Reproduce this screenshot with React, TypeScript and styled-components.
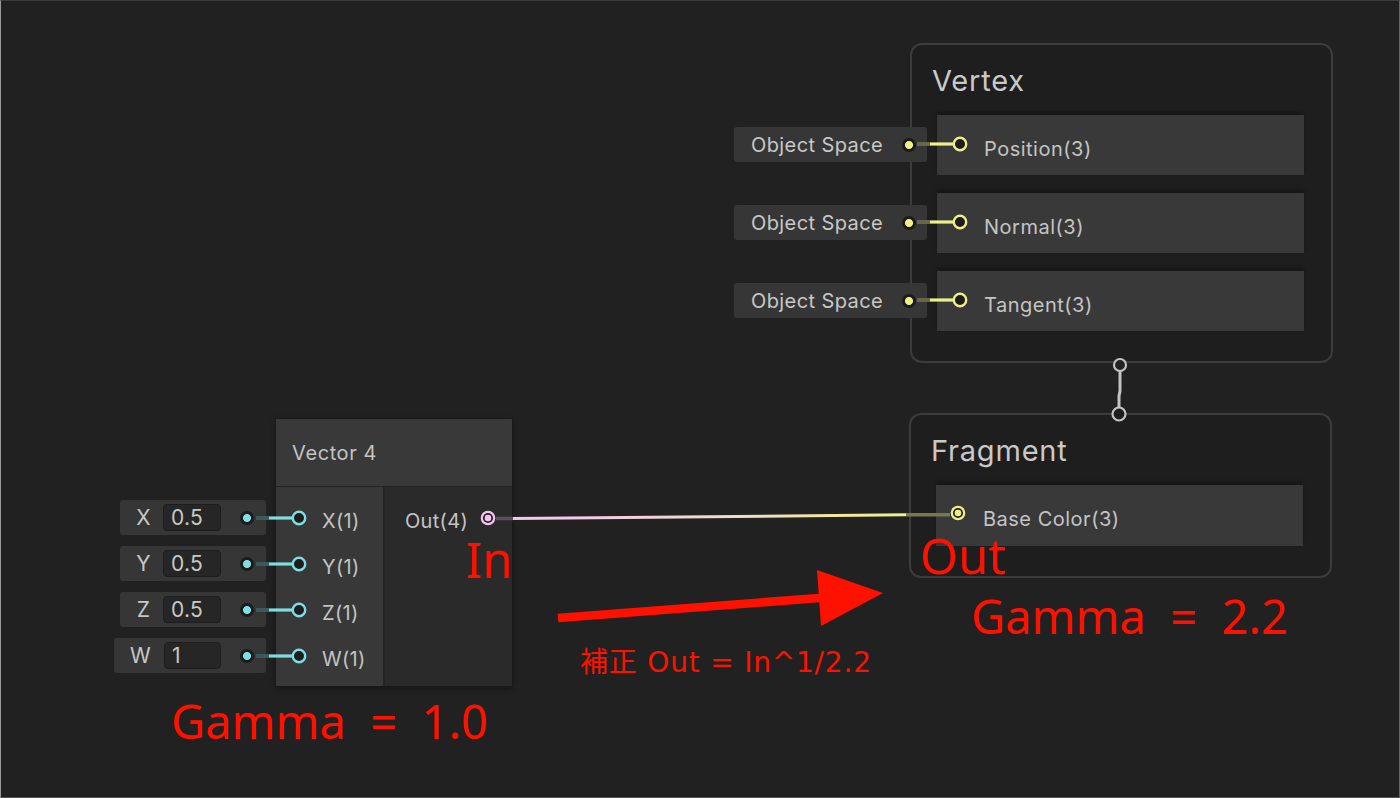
import React from "react";
import styled, { createGlobalStyle } from "styled-components";

const YELLOW = "#eef08a";
const YELLOW_DIM = "#66664a";
const CYAN = "#7fdde3";
const CYAN_DIM = "#3b5a5c";
const PINK = "#f4c4ee";
const RED = "#ff1100";

const GlobalStyle = createGlobalStyle`
  html, body {
    margin: 0;
    padding: 0;
    background: #212121;
  }
  body {
    font-family: Inter, "Noto Sans", sans-serif;
  }
`;

const Canvas = styled.main`
  position: relative;
  width: 1400px;
  height: 798px;
  box-sizing: border-box;
  background: #212121;
  border-top: 1px solid #3c3c3c;
  border-left: 1px solid #9a9a9a;
  border-right: 1px solid #666666;
  border-bottom: 1px solid #555555;
  overflow: hidden;
  font-family: Inter, "Noto Sans", sans-serif;
`;

/* ---------- master stack nodes (Vertex / Fragment) ---------- */

const ContextNode = styled.section<{ $x: number; $y: number }>`
  position: absolute;
  left: ${(p) => p.$x}px;
  top: ${(p) => p.$y}px;
  width: 423px;
  box-sizing: border-box;
  border: 2px solid #3c3c3c;
  border-radius: 12px;
  background: #1e1e1e;
  padding: 0 27px 30px 25px;
  display: flex;
  flex-direction: column;
  gap: 18px;
`;

const ContextTitle = styled.h2`
  margin: 0 0 0 -5px;
  height: 52px;
  box-sizing: border-box;
  padding-top: 22px;
  font-size: 29px;
  line-height: 28px;
  letter-spacing: 0.8px;
  font-weight: 400;
  color: #c9c9c9;
`;

const Slot = styled.div<{ $h: number }>`
  position: relative;
  height: ${(p) => p.$h}px;
  background: #393939;
  box-shadow: 0 -3px 4px rgba(0, 0, 0, 0.28);
  display: flex;
  align-items: center;
  padding: 7px 0 0 47px;
  box-sizing: border-box;
  font-size: 20px;
  letter-spacing: 0.5px;
  color: #c4c4c4;
`;

const InlineField = styled.div`
  position: absolute;
  right: calc(100% + 10px);
  top: 50%;
  margin-top: -18px;
  width: 193px;
  height: 35px;
  box-sizing: border-box;
  border-radius: 3px;
  background: #363636;
  display: flex;
  align-items: center;
  justify-content: space-between;
  padding: 0 11px 0 17px;
  font-size: 20px;
  letter-spacing: 0.4px;
  color: #c8c8c8;
`;

const FieldDot = styled.span<{ $c: string }>`
  flex: none;
  width: 14px;
  height: 14px;
  border-radius: 50%;
  background: radial-gradient(circle, ${(p) => p.$c} 0 3.6px, #1b1b1b 4.4px);
`;

const WireSvg = styled.svg<{ $dy: number }>`
  position: absolute;
  left: -20px;
  top: 50%;
  margin-top: ${(p) => p.$dy}px;
  overflow: visible;
`;

const PortHolder = styled.span`
  position: absolute;
  left: 14px;
  top: 50%;
  margin-top: -11px;
  display: flex;
`;

/* an empty input port with the short wire coming from its inline field */
function PortWire({ color, dim, dy }: { color: string; dim: string; dy: number }) {
  return (
    <WireSvg $dy={dy} width="52" height="20" viewBox="0 0 52 20">
      <line x1="0" y1="10" x2="13" y2="10" stroke={dim} strokeWidth="4" />
      <line x1="13" y1="10" x2="37" y2="10" stroke={color} strokeWidth="3.2" />
      <circle cx="43" cy="10" r="6.2" fill="#1d1d1d" stroke={color} strokeWidth="2.4" />
    </WireSvg>
  );
}

/* a port with an edge attached */
function LinkedPort({ color }: { color: string }) {
  return (
    <svg width="16" height="16" viewBox="0 0 16 16">
      <circle cx="8" cy="8" r="6.2" fill="#232323" stroke={color} strokeWidth="2.2" />
      <circle cx="8" cy="8" r="3.3" fill={color} />
    </svg>
  );
}

/* ---------- Vector 4 node ---------- */

const VecNode = styled.section`
  position: absolute;
  left: 275px;
  top: 418px;
  width: 236px;
  background: #2a2a2a;
  box-shadow: 0 0 0 1px #1a1a1a, 0 2px 6px rgba(0, 0, 0, 0.45);
  display: flex;
  flex-direction: column;
`;

const VecHeader = styled.header`
  height: 68px;
  box-sizing: border-box;
  background: #393939;
  border-bottom: 1px solid #242424;
  display: flex;
  align-items: center;
  padding-left: 16px;
  font-size: 20px;
  letter-spacing: 0.6px;
  color: #c4c4c4;
`;

const VecBody = styled.div`
  display: flex;
`;

const InputColumn = styled.div`
  width: 109px;
  box-sizing: border-box;
  border-right: 2px solid #242424;
  background: #383838;
  padding: 8px 0 7px;
  display: flex;
  flex-direction: column;
`;

const OutputColumn = styled.div`
  flex: 1;
  background: #2a2a2a;
  padding: 8px 16px 0 20px;
  display: flex;
  flex-direction: column;
`;

const InputRow = styled.div`
  position: relative;
  height: 46px;
  display: flex;
  align-items: center;
  padding: 6px 0 0 46px;
  box-sizing: border-box;
  font-size: 20px;
  letter-spacing: 0.3px;
  color: #c4c4c4;
`;

const OutputRow = styled.div`
  height: 46px;
  display: flex;
  align-items: center;
  justify-content: space-between;
  font-size: 20px;
  letter-spacing: 0.3px;
  color: #c4c4c4;
`;

const OutputLabel = styled.span`
  padding-top: 6px;
`;

const VecField = styled.div`
  position: absolute;
  right: calc(100% + 10px);
  top: 50%;
  margin-top: -18px;
  height: 35px;
  box-sizing: border-box;
  border-radius: 3px;
  background: #363636;
  display: flex;
  align-items: center;
  padding-right: 12px;
  font-size: 21px;
  letter-spacing: 0.3px;
  color: #c8c8c8;
`;

const AxisLabel = styled.span<{ $wide?: boolean }>`
  width: ${(p) => (p.$wide ? 50 : 43)}px;
  text-align: center;
  padding-left: ${(p) => (p.$wide ? 3 : 4)}px;
  box-sizing: border-box;
`;

const ValueBox = styled.span<{ $w: number }>`
  width: ${(p) => p.$w}px;
  height: 27px;
  box-sizing: border-box;
  border: 1px solid #1d1d1d;
  border-radius: 4px;
  background: #262626;
  padding-left: 7px;
  display: flex;
  align-items: center;
  margin-right: 19px;
`;

/* ---------- edges, flow link and red notes ---------- */

const EdgeLayer = styled.svg`
  position: absolute;
  left: -1px;
  top: -1px;
  width: 1400px;
  height: 798px;
  pointer-events: none;
`;

const Note = styled.span<{ $x: number; $y: number; $size: number }>`
  position: absolute;
  left: ${(p) => p.$x}px;
  top: ${(p) => p.$y}px;
  font-family: "Noto Sans", "Noto Sans CJK JP", sans-serif;
  font-size: ${(p) => p.$size}px;
  line-height: 1;
  color: ${RED};
  white-space: pre;
`;

const Formula = styled(Note)`
  font-family: "DejaVu Sans", "Noto Sans CJK JP", sans-serif;
  letter-spacing: 0.8px;
`;

const vertexSlots = ["Position(3)", "Normal(3)", "Tangent(3)"];

const vecInputs = [
  { axis: "X", value: "0.5" },
  { axis: "Y", value: "0.5" },
  { axis: "Z", value: "0.5" },
  { axis: "W", value: "1", wide: true },
];

export default function App() {
  return (
    <>
      <GlobalStyle />
      <Canvas>
        <ContextNode $x={909} $y={42}>
          <ContextTitle>Vertex</ContextTitle>
          {vertexSlots.map((name) => (
            <Slot key={name} $h={60}>
              <InlineField>
                <span>Object Space</span>
                <FieldDot $c={YELLOW} />
              </InlineField>
              <PortWire color={YELLOW} dim={YELLOW_DIM} dy={-11} />
              {name}
            </Slot>
          ))}
        </ContextNode>

        <ContextNode $x={908} $y={412}>
          <ContextTitle>Fragment</ContextTitle>
          <Slot $h={61}>
            <PortHolder>
              <LinkedPort color={YELLOW} />
            </PortHolder>
            Base Color(3)
          </Slot>
        </ContextNode>

        <VecNode>
          <VecHeader>Vector 4</VecHeader>
          <VecBody>
            <InputColumn>
              {vecInputs.map((inp) => (
                <InputRow key={inp.axis}>
                  <VecField>
                    <AxisLabel $wide={inp.wide}>{inp.axis}</AxisLabel>
                    <ValueBox $w={inp.wide ? 57 : 58}>{inp.value}</ValueBox>
                    <FieldDot $c={CYAN} />
                  </VecField>
                  <PortWire color={CYAN} dim={CYAN_DIM} dy={-10} />
                  {inp.axis}(1)
                </InputRow>
              ))}
            </InputColumn>
            <OutputColumn>
              <OutputRow>
                <OutputLabel>Out(4)</OutputLabel>
                <LinkedPort color={PINK} />
              </OutputRow>
            </OutputColumn>
          </VecBody>
        </VecNode>

        <EdgeLayer viewBox="0 0 1400 798">
          <defs>
            <linearGradient id="edgeGrad" gradientUnits="userSpaceOnUse" x1="512" y1="0" x2="905" y2="0">
              <stop offset="0" stopColor={PINK} />
              <stop offset="0.45" stopColor="#f1d6d6" />
              <stop offset="1" stopColor={YELLOW} />
            </linearGradient>
          </defs>
          {/* Out(4) -> Base Color(3) */}
          <line x1="496" y1="518.5" x2="513" y2="518.5" stroke="#5c4f5a" strokeWidth="3.5" />
          <line x1="513" y1="518.5" x2="906" y2="514.8" stroke="url(#edgeGrad)" strokeWidth="3" />
          <line x1="906" y1="514.8" x2="950" y2="514.8" stroke="#78784e" strokeWidth="3.5" />

          {/* Vertex -> Fragment flow link */}
          <path d="M1120 371 L1120 391 L1119 396 L1119 408" stroke="#c4c4c4" strokeWidth="3" fill="none" />
          <circle cx="1120" cy="365" r="6" fill="#222" stroke="#c4c4c4" strokeWidth="2.2" />
          <circle cx="1119" cy="414" r="6.5" fill="#1e1e1e" stroke="#c4c4c4" strokeWidth="2.2" />

          {/* correction arrow */}
          <line x1="558" y1="618" x2="832" y2="597" stroke={RED} strokeWidth="8.5" />
          <polygon points="817,570 883,593 821,626" fill={RED} />
        </EdgeLayer>

        <Note $x={465} $y={534} $size={49}>In</Note>
        <Note $x={919} $y={530} $size={49}>Out</Note>
        <Note $x={970} $y={592} $size={47}>{"Gamma  =  2.2"}</Note>
        <Note $x={170} $y={697} $size={47}>{"Gamma  =  1.0"}</Note>
        <Formula $x={579} $y={648} $size={28}>{"補正 Out = In^1/2.2"}</Formula>
      </Canvas>
    </>
  );
}
